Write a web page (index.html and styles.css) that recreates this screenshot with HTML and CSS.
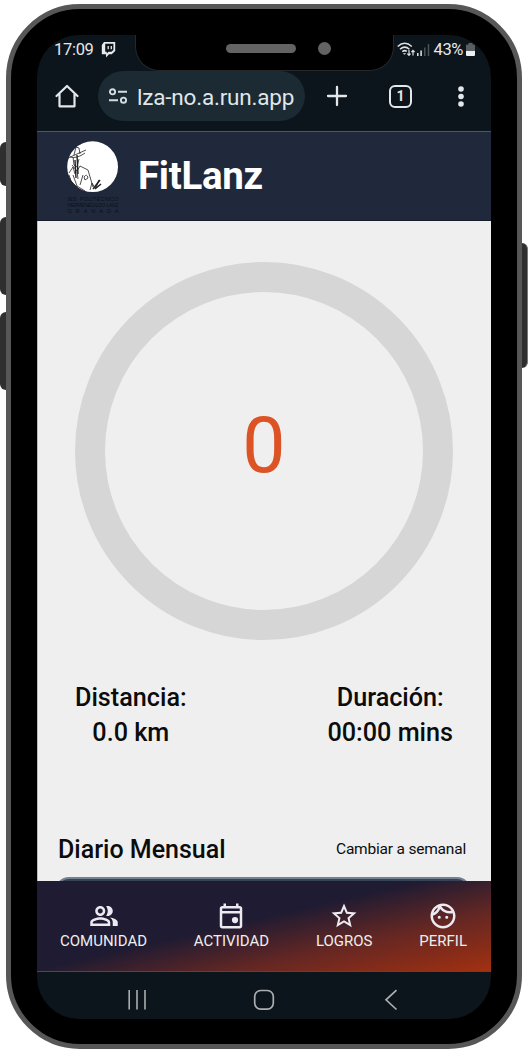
FILE: index.html
```html
<!DOCTYPE html>
<html lang="es">
<head>
<meta charset="utf-8">
<title>FitLanz</title>
<link rel="stylesheet" href="styles.css">
</head>
<body>
<div class="device">
  <span class="key key-mute"></span>
  <span class="key key-up"></span>
  <span class="key key-down"></span>
  <span class="key key-power"></span>
  <div class="phone">
    <div class="screen">
      <div class="notch"><span class="speaker"></span><span class="camera"></span></div>
      <div class="status">
        <div class="status-left">
          <span class="clock">17:09</span>
          <svg width="15" height="16" viewBox="0 0 15 16"><path d="M3 0H14.2V9L10.7 12.3H8L5 15.6V12.3H.8V3Z" fill="#e8eaec"/><path d="M4.2 1.8H12.4V8L10.5 9.8H7.5L5.8 11.4V9.8H4.2Z" fill="#0c151b"/><path d="M7.2 4V7.3M10.3 4V7.3" stroke="#e8eaec" stroke-width="1.3"/></svg>
        </div>
        <div class="status-right">
          <svg width="18" height="15" viewBox="0 0 18 15" fill="none" stroke="#dfe3e5" stroke-width="1.5"><path d="M.7 4.500Q7.700-2 14.800 4.500M3 7.200Q7.700 3 12.400 7.200M5.300 9.700Q7.700 7.700 9.800 9.400"/><path d="M7.500 12.800L5.800 11.200H9.200Z" fill="#dfe3e5" stroke="none"/><path d="M12 8V13.200M10.300 11.600L12 13.300 13.500 11.600M16 13.500V8.500M14.400 10.200L16 8.500 17.600 10.200" stroke-width="1.2"/></svg>
          <svg class="signal" width="13" height="13" viewBox="0 0 13 13"><path d="M.8 10V13M4.100 7.500V13" stroke="#e6e8e9" stroke-width="1.5"/><path d="M7.800 4.500V13M11.500 1V13" stroke="#4b5357" stroke-width="1.5"/></svg>
          <span class="percent">43%</span>
          <svg class="battery" width="9" height="13" viewBox="0 0 9 13"><path d="M2.500 0H6.500V1.500H8Q9 1.500 9 2.500V8H0V2.500Q0 1.500 1 1.500H2.500Z" fill="#585e62"/><path d="M0 8H9V12Q9 13 8 13H1Q0 13 0 12Z" fill="#eceeef"/></svg>
        </div>
      </div>
      <div class="toolbar">
        <svg class="home" width="24" height="24" viewBox="0 0 24 24" fill="none" stroke="#e4e7e9" stroke-width="2.2" stroke-linejoin="round" stroke-linecap="round"><path d="M1.500 12L12 2 22.500 12M4.500 10V22.300H19.500V10"/></svg>
        <div class="address">
          <svg width="20" height="16" viewBox="0 0 20 16" fill="none" stroke="#d5dcdf" stroke-width="1.9"><circle cx="4.500" cy="3.800" r="2.600"/><path d="M10 3.800H19M1 12.200H10"/><circle cx="15.500" cy="12.200" r="2.600"/></svg>
          <span class="url">lza-no.a.run.app</span>
        </div>
        <svg class="plus" width="20" height="20" viewBox="0 0 20 20" stroke="#e4e7e9" stroke-width="2.3" stroke-linecap="round"><path d="M10 1V19M1 10H19"/></svg>
        <div class="tabs">1</div>
        <svg class="more" width="6" height="21" viewBox="0 0 6 21" fill="#e4e7e9"><circle cx="3" cy="3" r="2.800"/><circle cx="3" cy="10.500" r="2.800"/><circle cx="3" cy="18" r="2.800"/></svg>
      </div>
      <header class="header">
        <svg class="logo" width="58" height="76" viewBox="0 0 58 76">
          <circle cx="26.600" cy="25.700" r="25.400" fill="#fff"/>
          <g fill="none" stroke="#222" stroke-width=".8">
            <path d="M2 17L20 9M4 16Q11 18 19 12M8 14L10 6 13 7 14 13M7 16L8 24 11 26 13 18M6 24L11 30 14 25M3 32L7 26 9 33M14 25L22 29 27 46M11 30L12 38M7 34L11 45 19 50M17 34L14 44M18 36Q21 32 22 37L19 39Z"/>
            <path d="M9 19L10 37M11 14L12 33" stroke-width="1.4"/>
            <path d="M3 34L5 40 14 49M24 49L26 42 29 47 33 39 30 47"/>
            <path d="M27 48L34 39M29 48L35 43" stroke-width="1.5"/>
          </g>
          <g fill="#0b111d" class="logo-text">
            <text x="1.500" y="59.500" textLength="51">IES&#160; POLITÉCNICO</text>
            <text x="1.500" y="65.500" textLength="51" class="logo-name">HERMENEGILDO LANZ</text>
            <text x="1.500" y="71.500" textLength="51">GRANADA</text>
          </g>
        </svg>
        <h1>FitLanz</h1>
      </header>
      <main>
        <div class="ring"><span>0</span></div>
        <section class="stats">
          <div class="stat"><div>Distancia:</div><div>0.0 km</div></div>
          <div class="stat"><div>Duración:</div><div>00:00 mins</div></div>
        </section>
        <section class="diary"><h2>Diario Mensual</h2><a>Cambiar a semanal</a></section>
        <div class="chart"></div>
      </main>
      <nav class="nav">
        <div class="item"><svg viewBox="0 0 24 24"><path d="M16.670 13.130C18.040 14.060 19 15.320 19 17v3h4v-3c0-2.180-3.570-3.470-6.330-3.870zM15 12c2.210 0 4-1.790 4-4s-1.790-4-4-4c-.47 0-.91.1-1.330.24C14.500 5.270 15 6.580 15 8s-.5 2.730-1.330 3.760c.42.14.86.24 1.330.24zM9 12c2.210 0 4-1.790 4-4s-1.790-4-4-4-4 1.790-4 4 1.790 4 4 4zm0-6c1.100 0 2 .9 2 2s-.9 2-2 2-2-.9-2-2 .9-2 2-2zM9 13c-2.670 0-8 1.340-8 4v3h16v-3c0-2.660-5.330-4-8-4zm6 5H3v-.99C3.200 16.290 6.300 15 9 15s5.800 1.290 6 2v1z"/></svg><span>COMUNIDAD</span></div>
        <div class="item"><svg viewBox="0 0 24 24"><path d="M19 4h-1V2h-2v2H8V2H6v2H5c-1.110 0-1.990.9-1.990 2L3 20c0 1.100.89 2 2 2h14c1.100 0 2-.9 2-2V6c0-1.100-.9-2-2-2zm0 16H5V10h14v10zm0-12H5V6h14v2z"/><circle cx="15.200" cy="15.200" r="2.500"/></svg><span>ACTIVIDAD</span></div>
        <div class="item"><svg viewBox="0 0 24 24"><path d="M22 9.240l-7.190-.62L12 2 9.190 8.630 2 9.240l5.460 4.730L5.820 21 12 17.270 18.180 21l-1.630-7.030L22 9.240zM12 15.400l-3.760 2.270 1-4.280-3.320-2.880 4.380-.38L12 6.100l1.710 4.040 4.380.38-3.320 2.880 1 4.280L12 15.400z"/></svg><span>LOGROS</span></div>
        <div class="item"><svg viewBox="0 0 24 24"><path d="M10.250 13a1.250 1.250 0 1 1-2.500 0 1.250 1.250 0 0 1 2.500 0zM15 11.750a1.250 1.250 0 1 0 0 2.500 1.250 1.250 0 0 0 0-2.500zM22 12c0 5.520-4.480 10-10 10S2 17.520 2 12 6.480 2 12 2s10 4.480 10 10zM10.660 4.120C12.060 6.440 14.600 8 17.500 8c.46 0 .91-.05 1.340-.12C17.440 5.560 14.900 4 12 4c-.46 0-.91.05-1.340.12zM4.420 9.470c1.710-.97 3.030-2.550 3.660-4.440C6.370 6 5.050 7.580 4.420 9.470zM20 12c0-.78-.12-1.530-.33-2.240-.70.15-1.420.24-2.170.24-3.130 0-5.920-1.440-7.760-3.690C8.690 8.870 6.600 10.880 4 11.860c.01.04 0 .09 0 .14 0 4.410 3.590 8 8 8s8-3.590 8-8z" fill-rule="evenodd"/></svg><span>PERFIL</span></div>
      </nav>
      <div class="system">
        <svg width="20" height="22" viewBox="0 0 20 22" stroke="#abafb1" stroke-width="1.6"><path d="M2.200 1V20.500M10 1V20.500M18 1V20.500"/></svg>
        <svg width="22" height="22" viewBox="0 0 22 22" fill="none" stroke="#abafb1" stroke-width="1.7"><rect x="1.700" y="1.500" width="18.600" height="18.600" rx="6"/></svg>
        <svg width="14" height="22" viewBox="0 0 14 22" fill="none" stroke="#abafb1" stroke-width="1.7"><path d="M12.500 1.200L2 10.800 12.500 20.500"/></svg>
      </div>
    </div>
  </div>
</div>
</body>
</html>
```
FILE: styles.css
```css
* { box-sizing: border-box; }
body { margin: 0; height: 1059px; background: #fff; overflow: hidden; font-family: Roboto, "Liberation Sans", sans-serif; }
svg { display: block; flex: none; overflow: visible; }
h1, h2 { margin: 0; }
.device { position: relative; width: 529px; height: 1059px; padding: 4px 7px 10px 6px; }
.phone { position: relative; height: 1045px; padding: 26px 26px 24px 26px; border: 5px solid #575757; border-radius: 74px; background: #000; }
.key { position: absolute; left: 0; width: 12px; background: #2f2f2f; border-radius: 6px; }
.key-mute { top: 142px; height: 44px; }
.key-up { top: 217px; height: 78px; }
.key-down { top: 312px; height: 78px; }
.key-power { top: 243px; left: 515px; width: 13px; height: 125px; border-right: 1px solid #777; }
.screen { position: relative; display: flex; flex-direction: column; height: 984px; border-radius: 42px; overflow: hidden; background: #0c151b; }
.notch { position: absolute; z-index: 2; top: -1px; left: 98px; width: 259px; height: 37px; background: #000; border: 1px solid #24282b; border-top: 0; border-radius: 0 0 24px 24px; display: flex; align-items: center; padding: 0 0 7px 90px; gap: 22px; }
.speaker { width: 70px; height: 9px; border-radius: 5px; background: #636363; }
.camera { width: 13px; height: 13px; border-radius: 50%; background: #636363; }
.status { height: 36px; display: flex; justify-content: space-between; padding: 5px 16px 0 17px; color: #e6e8ea; font-size: 16.500px; line-height: 20px; }
.status-left { display: flex; gap: 7px; }
.status-left svg { margin-top: 2px; }
.status-right { display: flex; }
.status-right svg { margin-top: 2px; }
.status-right .signal { margin: 3px 4px 0 2px; }
.status-right .battery { margin: 3px 0 0 3px; }
.clock { letter-spacing: -.3px; }
.percent { letter-spacing: -.4px; }
.toolbar { height: 61px; display: flex; align-items: center; padding: 0 27px 10px 18px; border-bottom: 1px solid #50575b; }
.address { width: 207px; height: 50px; margin-left: 19px; border-radius: 25px; background: #1b2a33; display: flex; align-items: center; gap: 9px; padding-left: 10px; color: #e0e6e9; font-size: 22.500px; white-space: nowrap; }
.address svg { margin-top: -1px; }
.url { letter-spacing: -.2px; padding-top: 1px; }
.plus { margin-left: 22px; }
.tabs { width: 23px; height: 23px; margin: 0 46px 0 42px; border: 2.500px solid #e4e7e9; border-radius: 6px; color: #e4e7e9; font-weight: 700; font-size: 14px; line-height: 19px; text-align: center; }
.header { height: 89px; background: #1f293b; display: flex; align-items: center; padding-left: 29px; border-bottom: 1px solid #151c29; }
.logo { margin-top: 5px; }
.logo-text { font: 400 5.500px "Liberation Sans", sans-serif; }
.logo-name { font-size: 4.900px; }
.header h1 { margin-left: 14px; color: #fff; font-size: 38.500px; line-height: 46px; letter-spacing: -.3px; }
main { height: 660px; background: #efefef; border-left: 1px solid #bbb; overflow: hidden; }
.ring { width: 378px; height: 378px; margin: 41px 0 0 37px; border: 30px solid #d6d6d6; border-radius: 50%; display: flex; align-items: center; justify-content: center; color: #dc5425; font-size: 77px; line-height: 1; padding-bottom: 9px; }
.stats { display: flex; justify-content: space-between; margin-top: 40px; padding: 0 38px 0 37px; font-size: 25.200px; font-weight: 500; line-height: 35px; color: #0c0c0c; }
.stat { text-align: center; }
.diary { margin-top: 81px; height: 36px; padding: 0 25px 0 20px; display: flex; align-items: center; justify-content: space-between; color: #0c0c0c; }
.diary h2 { font-size: 25px; font-weight: 500; }
.diary a { font-size: 15.500px; letter-spacing: -.2px; }
.chart { height: 30px; margin: 10px 20px 0 17px; border: 2px solid #748093; border-radius: 14px; background: #374356; }
.nav { height: 91px; background: linear-gradient(167deg, #1e1b32 0%, #1e1b32 45%, #652723 70%, #a23010 100%); display: flex; justify-content: space-between; padding: 20px 24px 0 23px; color: #eee; font-size: 15px; border-bottom: 1px solid #51474b; }
.item { display: flex; flex-direction: column; align-items: center; line-height: 21px; }
.item svg { width: 30px; height: 30px; fill: #eceaf0; }
.system { height: 47px; display: flex; align-items: center; justify-content: space-between; padding: 9px 93px 0 90px; }
.system svg:nth-child(2) { margin-right: 3px; }
```
